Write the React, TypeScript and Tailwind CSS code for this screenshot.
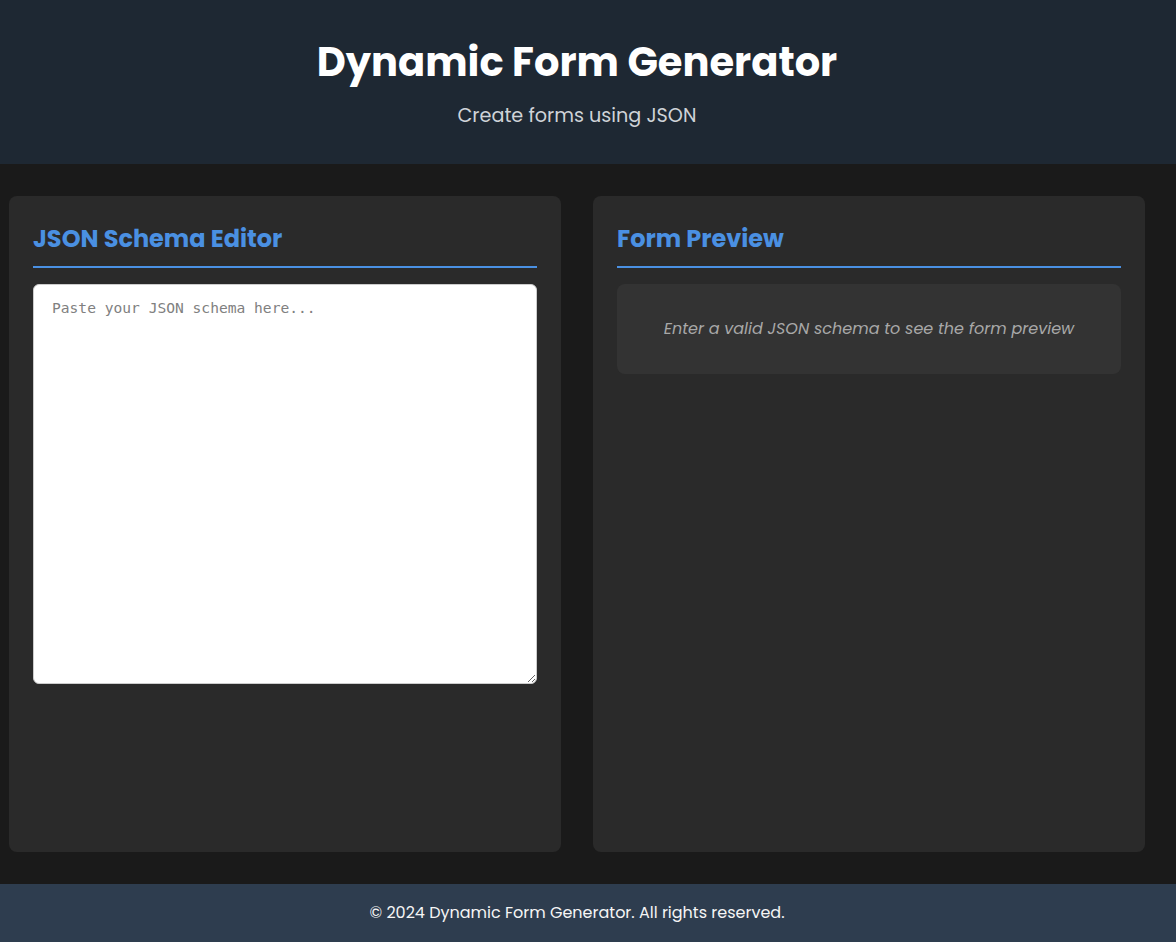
export default function App() {
  return (
    <div className="min-h-screen bg-[#1a1a1a] font-['Poppins','Inter',sans-serif] text-white">
      {/* Header */}
      <header className="bg-[#1e2833]">
        <div className="w-[1154px] pt-[32px] pb-[34px] text-center">
          <h1 className="text-[40px] leading-[60px] font-bold">Dynamic Form Generator</h1>
          <p className="mt-[10px] text-[19.2px] leading-[28px] text-[#cfd3d8]">Create forms using JSON</p>
        </div>
      </header>

      {/* Main */}
      <main className="w-[1154px] flex gap-[32px] py-[32px] px-[9px]">
        <section className="flex-1 h-[656px] rounded-lg bg-[#2a2a2a] p-[24px]">
          <h2 className="text-[24px] leading-[36px] font-bold text-[#4a90e2] pt-[1px] pb-[9px] border-b-2 border-[#4a90e2]">
            JSON Schema Editor
          </h2>
          <textarea
            placeholder="Paste your JSON schema here..."
            className="mt-[16px] block w-full h-[400px] rounded-md bg-white border border-[#ccc] px-[18px] py-[12px] font-['DejaVu_Sans_Mono',monospace] text-[14.6px] leading-[21px] text-[#222] placeholder:text-[#808080] outline-none"
          />
        </section>

        <section className="flex-1 h-[656px] rounded-lg bg-[#2a2a2a] p-[24px]">
          <h2 className="text-[24px] leading-[36px] font-bold text-[#4a90e2] pt-[1px] pb-[9px] border-b-2 border-[#4a90e2]">
            Form Preview
          </h2>
          <div className="mt-[16px] h-[90px] rounded-lg bg-[#333333] flex items-center justify-center">
            <p className="italic text-[16px] text-[#a8a8a8]">Enter a valid JSON schema to see the form preview</p>
          </div>
        </section>
      </main>

      {/* Footer */}
      <footer className="bg-[#2e3d4f]">
        <div className="w-[1154px] h-[58px] flex items-center justify-center">
          <p className="text-[16px] text-[#f5f5f5]">© 2024 Dynamic Form Generator. All rights reserved.</p>
        </div>
      </footer>
    </div>
  );
}
